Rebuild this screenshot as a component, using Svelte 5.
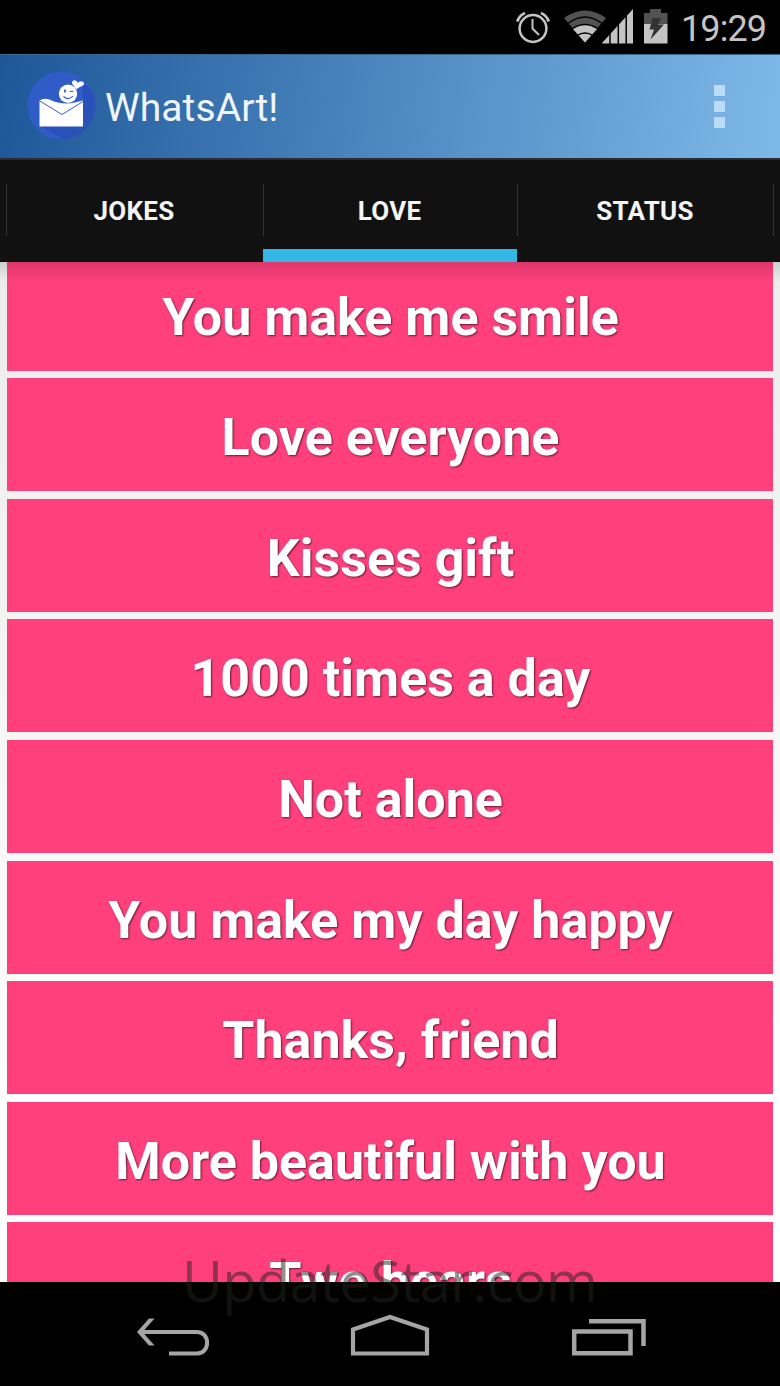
<script>
  const tabs = ['JOKES', 'LOVE', 'STATUS'];
  const messages = [
    'You make me smile',
    'Love everyone',
    'Kisses gift',
    '1000 times a day',
    'Not alone',
    'You make my day happy',
    'Thanks, friend',
    'More beautiful with you',
    'Two bears'
  ];
</script>

<div class="phone">
  <div class="status">
    <svg width="160" height="54" viewBox="0 0 160 54">
      <g fill="none" stroke="#c4c4c4">
        <circle cx="22" cy="28.500" r="13.400" stroke-width="2.500" />
        <path d="M21.500 19V28.500L28 35" stroke-width="2" />
        <path d="M6.300 21.500C7.500 17.500 10.500 14.500 14 13M37.700 21.500C36.500 17.500 33.500 14.500 30 13" stroke-width="2.800" />
      </g>
      <path fill="#525252" d="M53 18Q74 3 95 18L74 42.500Z" />
      <path fill="#c4c4c4" d="M61.500 28.500Q74 21 86.500 28.500L74 42.500Z" />
      <g fill="none" stroke="#000" stroke-width="1.300">
        <path d="M57 23.500Q74 10.500 91 23.500M61 29Q74 20 87 29M66 35.500Q74 30.500 82 35.500" />
      </g>
      <path fill="#c4c4c4" d="M91 43L122 9V43.500H91Z" />
      <path stroke="#000" stroke-width="1.500" d="M99 20V44M107.300 15V44M115.200 10V44" />
      <path fill="#525252" d="M133 13H139V9H150V13H156.500V25H133Z" />
      <path fill="#c4c4c4" d="M133 24H156.500V43.500H133Z" />
      <path fill="#333" d="M141.500 18H150L147 24.500H153L139.500 39.500L143 29.500H138.500Z" />
    </svg>
    <span class="clock">19:29</span>
  </div>

  <header>
    <svg class="logo" width="70" height="70" viewBox="0 0 70 70">
      <defs>
        <clipPath id="disc"><circle cx="34.500" cy="34.500" r="34" /></clipPath>
        <linearGradient id="shade" x1="0" y1="0" x2="1" y2="1">
          <stop offset="0.450" stop-color="#284fbd" />
          <stop offset="1" stop-color="#2a56b0" />
        </linearGradient>
      </defs>
      <g clip-path="url(#disc)">
        <path fill="#2f5cc6" d="M0 0H70V70H0Z" />
        <path fill="url(#shade)" d="M56 11L70 25V70H39L13 55H56Z" />
      </g>
      <path fill="#fff" d="M12.500 29.500Q17 26.500 23 28.800Q35 34.500 48 31.500L56 29.500V55.500H12.500Z" />
      <path fill="none" stroke="#315fc8" stroke-width="1" d="M12.500 29.800L35 43.500L56 30.500" />
      <circle cx="41" cy="22.700" r="9.200" fill="#fff" />
      <path fill="#fff" d="M49.500 18.500L45.300 13C43.700 9 49 7.500 50.800 12C53 9.200 58.500 10.500 56.800 13.500C55.500 15.500 52 15.500 49.500 18.500Z" />
      <g fill="none" stroke="#315fc8">
        <path stroke-width="1.800" d="M38 18.500V21.500" />
        <path stroke-width="1.100" d="M42.500 20.500L46.500 20.200M36.500 25.500Q41.500 30 46 25" />
      </g>
    </svg>
    <h1>WhatsArt!</h1>
    <div class="more"><i></i><i></i><i></i></div>
  </header>

  <nav class="tabs">
    {#each tabs as tab, i}
      <div class="tab" class:active={i === 1}><span>{tab}</span></div>
    {/each}
  </nav>

  <main>
    <ul>
      {#each messages as message}
        <li>{message}</li>
      {/each}
    </ul>
  </main>

  <footer>
    <svg width="780" height="104" viewBox="0 0 780 104" fill="none" stroke="#a5a5a5">
      <path stroke-width="4" d="M139 50H197C210.500 50 210.500 71.500 197 71.500H169" />
      <path fill="#a5a5a5" stroke="none" d="M137 50L149 36.500H154.500L142.500 50L154.500 63.500H149Z" />
      <path stroke-width="4.200" d="M353 47.500L390 35L427 47.500V71.500H353Z" />
      <path stroke-width="4.500" d="M574.200 49.500H630.500V71.300H574.200ZM589 39.200H643.500V64" />
    </svg>
  </footer>
  <div class="watermark">UpdateStar.com</div>
</div>

<style>
  :global(body) { margin: 0; background: #000; }
  .phone {
    position: relative;
    width: 780px;
    height: 1386px;
    display: flex;
    flex-direction: column;
    overflow: hidden;
    font-family: Roboto, sans-serif;
    background: #000;
  }
  .status {
    height: 54px;
    flex: none;
    display: flex;
    justify-content: flex-end;
    padding-right: 13px;
    color: #c4c4c4;
  }
  .status svg { flex: none; margin-right: 10px; }
  .clock { font-size: 36px; line-height: 58px; width: 86px; letter-spacing: -0.9px; white-space: nowrap; }
  header {
    box-sizing: border-box;
    height: 104px;
    flex: none;
    display: flex;
    align-items: center;
    padding: 0 55px 0 27px;
    background: linear-gradient(98deg, #1e5799 0%, #7db9e8 100%);
    border-top: 1px solid #34688f;
  }
  .logo { flex: none; margin-top: -1px; }
  h1 {
    margin: 2px auto 0 8px;
    font-size: 39px;
    font-weight: 400;
    line-height: 46px;
    letter-spacing: 0.1px;
    color: #f0f5fc;
    white-space: nowrap;
  }
  .more { display: grid; gap: 5px; width: 11px; margin-top: -1px; }
  .more i { height: 11px; background: #bcdcf5; }
  .tabs {
    box-sizing: border-box;
    height: 104px;
    flex: none;
    display: grid;
    grid-template-columns: 256px 255px 257px;
    padding: 0 6px;
    background: #111;
    border-top: 2px solid #292d31;
    border-bottom: 1px solid #080808;
  }
  .tab {
    box-sizing: border-box;
    display: flex;
    justify-content: center;
    padding-top: 24px;
    background: linear-gradient(#333, #333) 0 24px / 1px 52px no-repeat;
    color: #f4f4f4;
    font-size: 26px;
    font-weight: 700;
    line-height: 54px;
    letter-spacing: 0.3px;
  }
  .tab:last-child {
    padding-right: 1px;
    background:
      linear-gradient(#333, #333) 0 24px / 1px 52px no-repeat,
      linear-gradient(#333, #333) 100% 24px / 1px 52px no-repeat;
  }
  .active {
    margin: 0 0 -1px 1px;
    padding-right: 1px;
    border-bottom: 13px solid #33b5e5;
    background: linear-gradient(#333, #333) 0 24px / 1px 52px no-repeat;
  }
  main {
    height: 1020px;
    flex: none;
    overflow: hidden;
    background: linear-gradient(#ececec, #fff 85%);
    position: relative;
  }
  main::before {
    content: '';
    position: absolute;
    inset: 0 0 auto;
    height: 20px;
    background: linear-gradient(rgba(0, 0, 0, .13), transparent);
  }
  ul {
    list-style: none;
    margin: -4.200px 0 0;
    padding: 0 7.300px;
    display: grid;
    grid-auto-rows: 113px;
    row-gap: 7.550px;
  }
  li {
    box-sizing: border-box;
    padding: 6px 0 0 1px;
    background: #ff407d;
    color: #fff;
    font-size: 52px;
    font-weight: 700;
    line-height: 107px;
    text-align: center;
    text-shadow: 1px 1px 2px rgba(0, 0, 0, .6);
    white-space: nowrap;
  }
  footer { height: 104px; flex: none; background: #000; }
  footer svg { display: block; }
  .watermark {
    position: absolute;
    left: 182px;
    top: 1245px;
    font: 56px/70px "Open Sans", sans-serif;
    letter-spacing: -0.6px;
    color: rgba(32, 36, 34, .5);
    white-space: nowrap;
  }
</style>
